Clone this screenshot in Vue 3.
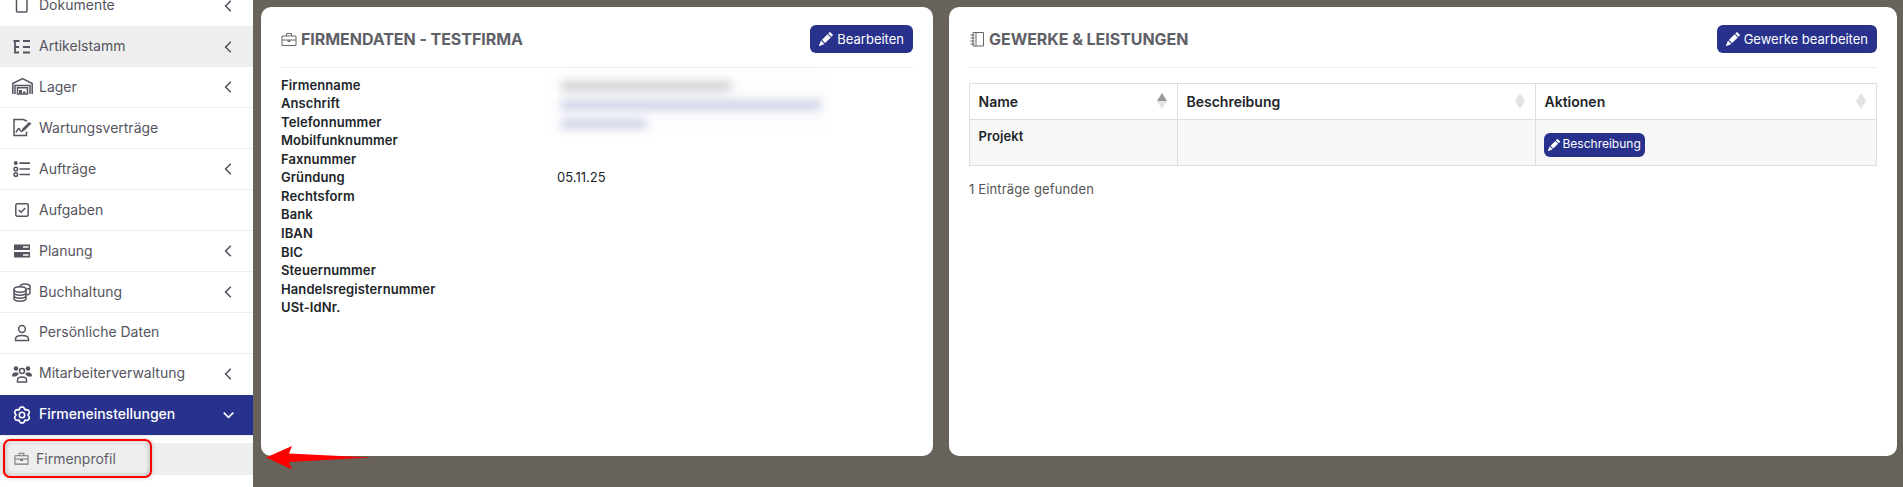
<script setup>
const rows = [
  { t: 'Dokumente', i: 'doc', c: 1 },
  { t: 'Artikelstamm', i: 'tree', c: 1, hover: 1 },
  { t: 'Lager', i: 'garage', c: 1 },
  { t: 'Wartungsverträge', i: 'sign' },
  { t: 'Aufträge', i: 'list', c: 1 },
  { t: 'Aufgaben', i: 'check' },
  { t: 'Planung', i: 'server', c: 1 },
  { t: 'Buchhaltung', i: 'coins', c: 1 },
  { t: 'Persönliche Daten', i: 'person' },
  { t: 'Mitarbeiterverwaltung', i: 'people', c: 1 }
]
const labels = ['Firmenname', 'Anschrift', 'Telefonnummer', 'Mobilfunknummer', 'Faxnummer', 'Gründung', 'Rechtsform', 'Bank', 'IBAN', 'BIC', 'Steuernummer', 'Handelsregisternummer', 'USt-IdNr.']
const values = { 'Gründung': '05.11.25' }
const pencil = 'M12.854.146a.5.5 0 0 0-.707 0L10.5 1.793 14.207 5.5l1.647-1.646a.5.5 0 0 0 0-.708l-3-3zm.646 6.061L9.793 2.5 3.293 9H3.5a.5.5 0 0 1 .5.5v.5h.5a.5.5 0 0 1 .5.5v.5h.5a.5.5 0 0 1 .5.5v.5h.5a.5.5 0 0 1 .5.5v.207l6.5-6.5zm-7.468 7.468A.5.5 0 0 1 6 13.5V13h-.5a.5.5 0 0 1-.5-.5V12h-.5a.5.5 0 0 1-.5-.5V11h-.5a.5.5 0 0 1-.5-.5V10h-.5a.499.499 0 0 1-.175-.032l-.179.178a.5.5 0 0 0-.11.168l-2 5a.5.5 0 0 0 .65.65l5-2a.5.5 0 0 0 .168-.11l.178-.178z'
const gear = (() => {
  const pts = []
  const n = 6
  for (let k = 0; k < n; k++) {
    const a = (k * 2 * Math.PI) / n - Math.PI / 2
    const st = (2 * Math.PI) / n
    for (const [off, r] of [[-0.3, 7.2], [-0.14, 8], [0.14, 8], [0.3, 7.2], [0.5, 5.9]]) {
      const b = a + off * st
      pts.push((10 + r * Math.cos(b)).toFixed(2) + ' ' + (10 + r * Math.sin(b)).toFixed(2))
    }
  }
  return 'M' + pts.join('L') + 'Z'
})()
</script>

<template>
  <div class="page">
    <aside class="side">
      <div class="rows">
        <div v-for="r in rows" :key="r.t" class="row" :class="{ hover: r.hover, nob: r.hover || r.t === 'Mitarbeiterverwaltung' }">
          <svg class="ic" viewBox="0 0 20 20">
            <g v-if="r.i === 'doc'"><path d="M4.500 1h10.500v14a1 1 0 0 1-1 1H5.500a1 1 0 0 1-1-1z" /></g>
            <g v-else-if="r.i === 'tree'"><path d="M3 3v12.500h4M3 10h4M1.500 4h6M11 4h7M11 10h7M11 15.500h7" stroke-width="1.800" /></g>
            <g v-else-if="r.i === 'garage'"><path d="M.8 17V6.500L10.500 1.500l9.700 5V17M3 17V8.500h15V17" /><path d="M5.500 10.800h10V17h-10z" /><path d="M7 13h3v3.500H7zM11 14.500h2.500v2H11z" class="fill" /></g>
            <g v-else-if="r.i === 'sign'"><path d="M14.500 3.500V3l-3-1.500H2v16h12.500v-4" /><path d="M4 14.500c2-4 3-5 4-2.500 1 2 2 1.500 3 .5" /><path d="M10.500 10.500l6.500-6.500 2.500 1.500-7 7-3 1z" class="fill" /></g>
            <g v-else-if="r.i === 'list'"><path d="M7.500 4.200h10.500M7.500 10h10.500M7.500 15.500h10.500" stroke-width="1.700" /><circle cx="3.800" cy="4" r="2" class="fill" /><circle cx="3.800" cy="10" r="1.800" /><circle cx="3.800" cy="15.500" r="1.800" /></g>
            <g v-else-if="r.i === 'check'"><rect x="3.800" y="3.800" width="12.400" height="12.400" rx="1.500" /><path d="M6.800 10l2.300 2.300 4.200-4.300" /></g>
            <g v-else-if="r.i === 'server'"><path d="M2 3.500h16v5.500H2zM2 11h16v5.500H2z" class="fill" /><path d="M11 6h5.500M11 14h5.500" class="inv" /></g>
            <g v-else-if="r.i === 'coins'"><ellipse cx="8" cy="7.500" rx="6" ry="2.700" /><path d="M2 7.500v9c0 1.500 2.700 2.700 6 2.700s6-1.200 6-2.700v-9M2 10.500c0 1.500 2.700 2.700 6 2.700s6-1.200 6-2.700M2 13.500c0 1.500 2.700 2.700 6 2.700s6-1.200 6-2.700" /><path d="M8 4c.8-2.600 9-3 10 0v7c0 .8-1.500 1.500-3.500 2M14.500 7c2 0 3.500-.7 3.500-1.500" /></g>
            <g v-else-if="r.i === 'person'"><circle cx="10" cy="6" r="3.400" /><path d="M3.500 17.500v-1.500c0-2 2-3.500 6.500-3.500s6.500 1.500 6.500 3.500v1.500z" /></g>
            <g v-else><circle cx="10" cy="7" r="2.500" /><path d="M5.500 18v-2c0-2 2-3 4.500-3s4.500 1 4.500 3v2z" /><circle cx="4" cy="4.500" r="2.300" class="fill" /><circle cx="16" cy="4.500" r="2.300" class="fill" /><path d="M0 11.500c0-3.500 7-4.500 6.500-1l-2.500 2H.5zM20 11.500c0-3.500-7-4.500-6.500-1l2.500 2h3.500z" class="fill" /></g>
          </svg>
          <span class="t">{{ r.t }}</span>
          <svg v-if="r.c" class="chev" viewBox="0 0 10 16"><path d="M8.500 1.500L2 8l6.500 6.500" /></svg>
        </div>
        <div class="row active">
          <svg class="ic" viewBox="0 0 20 20"><circle cx="10" cy="10" r="2.700" /><path :d="gear" /></svg>
          <span class="t">Firmeneinstellungen</span>
          <svg class="chev down" viewBox="0 0 16 10"><path d="M2 2l6 6 6-6" /></svg>
        </div>
      </div>
      <div class="subs">
        <div class="sub cur">
          <svg class="subic" viewBox="0 0 16 16"><path d="M1 5h14v9H1zM5.500 5V2.500h5V5M1 8.500h14M7 8.500v1.500h2V8.500" /></svg>
          <span>Firmenprofil</span>
        </div>
        <div class="sub">
          <span class="subic"></span>
          <span>Zusatzfunktionen</span>
        </div>
      </div>
    </aside>
    <main class="main">
      <section class="card">
        <header class="head">
          <h2>
            <svg class="hic" viewBox="0 0 16 16"><path d="M1 5h14v9.500H1zM5.500 5V2.500h5V5M1 9h14M7 9v1.500h2V9" /></svg>
            FIRMENDATEN - TESTFIRMA
          </h2>
          <button class="btn"><svg viewBox="0 0 16 16"><path :d="pencil" /></svg>Bearbeiten</button>
        </header>
        <div class="data">
          <template v-for="l in labels" :key="l">
            <b>{{ l }}</b><span>{{ values[l] || '' }}</span>
          </template>
          <div class="blur">
            <i class="grey"></i><i class="blue"></i><i class="blue short"></i>
          </div>
        </div>
      </section>
      <section class="card">
        <header class="head">
          <h2>
            <svg class="hic" viewBox="0 0 16 16"><path d="M4 1.500h10.500v13.500H4zM7 1.500v13.500M1.500 4h4M1.500 7h4M1.500 10h4M1.500 13h4" /></svg>
            GEWERKE &amp; LEISTUNGEN
          </h2>
          <button class="btn"><svg viewBox="0 0 16 16"><path :d="pencil" /></svg>Gewerke bearbeiten</button>
        </header>
        <table>
          <colgroup><col class="c1" /><col class="c2" /><col /></colgroup>
          <thead>
            <tr>
              <th>Name<span class="sort"><i class="up"></i><i></i></span></th>
              <th>Beschreibung<span class="sort"><i></i><i></i></span></th>
              <th>Aktionen<span class="sort"><i></i><i></i></span></th>
            </tr>
          </thead>
          <tbody>
            <tr>
              <td><b>Projekt</b></td>
              <td></td>
              <td class="act"><button class="btn small"><svg viewBox="0 0 16 16"><path :d="pencil" /></svg>Beschreibung</button></td>
            </tr>
          </tbody>
        </table>
        <p class="found">1 Einträge gefunden</p>
      </section>
    </main>
    <div class="mark"></div>
    <svg class="arrow" viewBox="0 0 107 28"><path d="M1 13.500L27 2l-3 7.500 82 4-82 4.500 3 7.500z" /></svg>
  </div>
</template>

<style>
html, body { margin: 0; background: #67635a; overflow: hidden; }
</style>

<style scoped>
.page {
  position: relative;
  display: flex;
  width: 1903px;
  height: 487px;
  overflow: hidden;
  background: #67635a;
  font-family: Inter, "Liberation Sans", sans-serif;
  font-size: 13px;
  line-height: 18.57px;
  color: #212529;
}
.side {
  flex: 0 0 253px;
  width: 253px;
  height: 487px;
  overflow: hidden;
  background: #fff;
  color: #555560;
}
.rows { margin-top: -14.300px; }
.row {
  box-sizing: border-box;
  display: flex;
  align-items: center;
  height: 40.900px;
  padding: 0 17px 0 12px;
  border-bottom: 1px solid #eceded;
  font-size: 14px;
}
.row.hover { background: #eeeeee; }
.row.nob { border-bottom-color: transparent; }
.row.active { background: #28328c; color: #fff; font-weight: 500; }
.ic {
  flex: none;
  width: 20px;
  height: 20px;
  margin-right: 7px;
  overflow: visible;
  fill: none;
  stroke: #555560;
  stroke-width: 1.500;
}
.active .ic { stroke: #fff; stroke-width: 1.600; stroke-linejoin: round; }
.ic .fill { fill: #555560; stroke: none; }
.ic .inv { stroke: #fff; }
.t { flex: 1; }
.chev {
  flex: none;
  width: 8px;
  height: 14px;
  margin-right: 4px;
  fill: none;
  stroke: #555560;
  stroke-width: 2;
}
.chev.down { width: 13px; height: 8px; margin-right: 1px; stroke: #fff; }
.subs { padding-top: 7.300px; }
.sub {
  display: flex;
  align-items: center;
  height: 32px;
  padding-left: 14px;
  font-size: 14px;
  color: #5e5e68;
}
.sub.cur { background: #eeeeee; }
.sub + .sub { height: 24px; padding-top: 8px; filter: blur(.6px); }
.subic {
  flex: none;
  width: 15px;
  height: 15px;
  margin-right: 7px;
  fill: none;
  stroke: #777;
  stroke-width: 1.100;
}
.main {
  flex: 1;
  display: grid;
  grid-template-columns: 672px 948px;
  column-gap: 16px;
  align-items: start;
  padding: 7px 0 0 8px;
}
.card {
  box-sizing: border-box;
  height: 449px;
  padding: 18px 20px;
  background: #fff;
  border-radius: 10px;
}
.head {
  display: flex;
  align-items: center;
  justify-content: space-between;
  height: 28px;
  padding-bottom: 13.500px;
  border-bottom: 1px solid #ebedef;
  margin-bottom: 8px;
}
h2 {
  display: flex;
  align-items: center;
  gap: 4px;
  margin: 0;
  font-size: 16px;
  font-weight: 700;
  letter-spacing: -.05px;
  color: #5f6167;
}
.hic {
  width: 16px;
  height: 16px;
  fill: none;
  stroke: #666;
  stroke-width: 1;
}
.btn {
  display: inline-flex;
  align-items: center;
  gap: 4px;
  height: 28px;
  padding: 0 9px;
  border: 0;
  border-radius: 6px;
  background: #28328c;
  color: #fff;
  font: inherit;
  font-size: 13px;
}
.btn svg { width: 14px; height: 14px; fill: #fff; }
.btn.small {
  display: flex;
  height: 24px;
  margin-left: -1px;
  padding: 0 4px;
  gap: 3px;
  font-size: 12px;
}
.btn.small svg { width: 12px; height: 12px; }
.data {
  position: relative;
  display: grid;
  grid-template-columns: 276px 1fr;
  grid-auto-rows: 18.570px;
}
.data b { font-weight: 600; letter-spacing: .1px; }
.blur {
  position: absolute;
  top: 2px;
  left: 274px;
  width: 272px;
  height: 54px;
  display: flex;
  flex-direction: column;
  gap: 9px;
  padding: 3px 0 0 6px;
  box-sizing: border-box;
  background: #fdfdfe;
  filter: blur(5px);
}
.blur i { display: block; height: 10px; width: 170px; background: #cfd0d3; }
.blur .blue { width: 260px; background: #cdd1e6; }
.blur .short { width: 85px; }
table {
  width: 908px;
  table-layout: fixed;
  margin-top: 15px;
  border-collapse: collapse;
}
.c1 { width: 208px; }
.c2 { width: 358px; }
th, td {
  box-sizing: border-box;
  border: 1px solid #dedede;
  padding: 0 8.500px;
  text-align: left;
}
th {
  position: relative;
  height: 36px;
  padding-top: 2px;
  font-size: 14px;
  font-weight: 600;
  background: #fff;
}
td {
  height: 46px;
  vertical-align: top;
  padding-top: 7px;
  background: #f8f8f8;
}
td.act { padding-top: 13px; padding-bottom: 0; }
td b { font-weight: 600; letter-spacing: .1px; }
.sort {
  position: absolute;
  right: 10px;
  top: 9px;
  display: flex;
  flex-direction: column;
}
.sort i {
  display: block;
  width: 0;
  height: 0;
  border-left: 5px solid transparent;
  border-right: 5px solid transparent;
  border-bottom: 8px solid #e3e3e3;
}
.sort i + i { border-bottom: 0; border-top: 8px solid #e3e3e3; }
.sort i.up { border-bottom-color: #999; }
.found { margin: 14px 0 0; letter-spacing: .15px; color: #555; }
.mark {
  position: absolute;
  left: 3px;
  top: 439px;
  width: 149px;
  height: 39px;
  box-sizing: border-box;
  border: 2px solid #f00;
  border-radius: 7px;
  box-shadow: inset 0 0 5px rgba(0, 0, 0, .3), 0 0 4px rgba(0, 0, 0, .2);
}
.arrow {
  position: absolute;
  left: 265px;
  top: 444px;
  width: 107px;
  height: 28px;
  fill: #f00;
}
</style>
